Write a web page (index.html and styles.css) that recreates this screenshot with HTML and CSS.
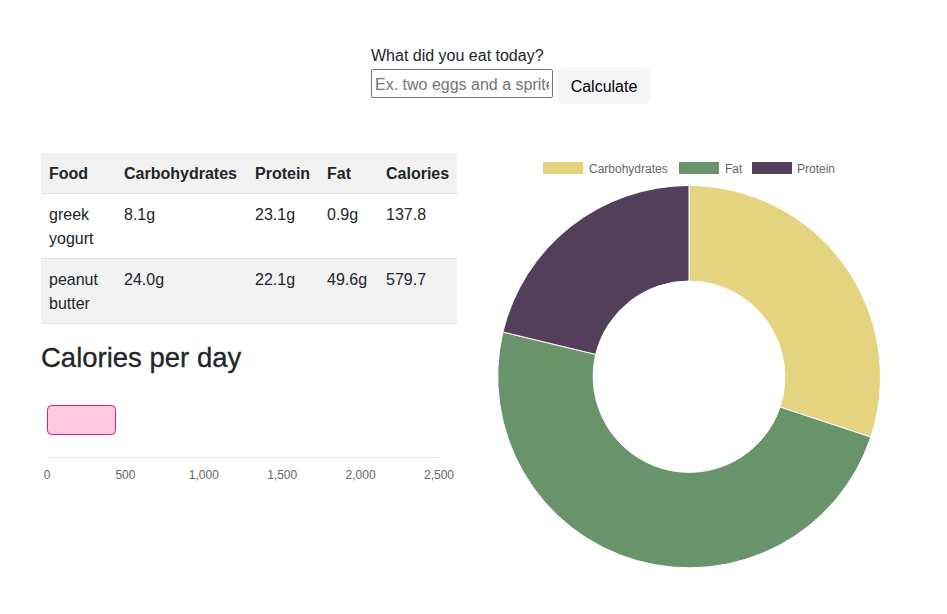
FILE: index.html
```html
<!DOCTYPE html>
<html>
<head>
<meta charset="utf-8">
<link rel="stylesheet" href="styles.css">
</head>
<body>
<div class="page">
  <form class="entry">
    <label class="entry-label" for="food">What did you eat today?</label>
    <div class="entry-row">
      <input id="food" class="entry-input" type="text" placeholder="Ex. two eggs and a sprite">
      <button type="button" class="entry-btn">Calculate</button>
    </div>
  </form>

  <div class="columns">
    <div class="left">
      <table class="foods">
        <colgroup>
          <col class="c-food"><col class="c-carb"><col class="c-prot"><col class="c-fat"><col class="c-cal">
        </colgroup>
        <thead>
          <tr><th>Food</th><th>Carbohydrates</th><th>Protein</th><th>Fat</th><th>Calories</th></tr>
        </thead>
        <tbody>
          <tr><td>greek yogurt</td><td>8.1g</td><td>23.1g</td><td>0.9g</td><td>137.8</td></tr>
          <tr class="alt"><td>peanut butter</td><td>24.0g</td><td>22.1g</td><td>49.6g</td><td>579.7</td></tr>
        </tbody>
      </table>
      <h2 class="cal-title">Calories per day</h2>
      <svg class="bar-chart" width="416" height="100" viewBox="0 0 416 100">
        <rect x="6.5" y="15.5" width="68" height="29" rx="4" fill="#ffcadf" stroke="#c8267a" stroke-width="1"/>
        <line x1="6" y1="67.5" x2="398" y2="67.5" stroke="#e6e6e6" stroke-width="1"/>
        <g class="ticks">
          <text x="6" y="89">0</text>
          <text x="84.4" y="89">500</text>
          <text x="162.8" y="89">1,000</text>
          <text x="241.2" y="89">1,500</text>
          <text x="319.6" y="89">2,000</text>
          <text x="398" y="89">2,500</text>
        </g>
      </svg>
    </div>

    <div class="right">
      <svg class="donut" width="416" height="420" viewBox="0 0 416 420">
        <g class="legend">
          <rect x="62" y="9" width="40" height="12" fill="#e5d47f"/>
          <text x="108" y="19.5">Carbohydrates</text>
          <rect x="198" y="9" width="40" height="12" fill="#68936b"/>
          <text x="244" y="19.5">Fat</text>
          <rect x="271" y="9" width="40" height="12" fill="#533f59"/>
          <text x="316" y="19.5">Protein</text>
        </g>
        <g stroke="#ffffff" stroke-width="1">
          <path fill="#e5d47f" d="M208,32.5 A191.5,191.5 0 0 1 389.8,284.1 L299.1,254.1 A96,96 0 0 0 208,128 Z"/>
          <path fill="#68936b" d="M389.8,284.1 A191.5,191.5 0 0 1 21.9,179 L114.7,201.4 A96,96 0 0 0 299.1,254.1 Z"/>
          <path fill="#533f59" d="M21.9,179 A191.5,191.5 0 0 1 208,32.5 L208,128 A96,96 0 0 0 114.7,201.4 Z"/>
        </g>
      </svg>
    </div>
  </div>
</div>
</body>
</html>
```

FILE: styles.css
```css
html, body {
  margin: 0;
  padding: 0;
  background: #ffffff;
}

body {
  font-family: "Liberation Sans", Arial, sans-serif;
  font-size: 16px;
  line-height: 24px;
  color: #212529;
}

.page {
  padding: 44px 0 0 41px;
}

.entry {
  margin: 0 0 0 330px;
  display: flex;
  flex-direction: column;
  align-items: flex-start;
}

.entry-label {
  display: block;
  height: 24px;
}

.entry-row {
  display: flex;
  align-items: flex-start;
  gap: 4px;
  margin-top: -1px;
}

.entry-input {
  box-sizing: border-box;
  width: 182px;
  height: 29px;
  margin-top: 2px;
  padding: 2px 3px 0 3px;
  border: 1px solid #767676;
  border-radius: 2px;
  font-family: "Liberation Sans", Arial, sans-serif;
  font-size: 16px;
  color: #212529;
  background: #fff;
}

.entry-input::placeholder {
  color: #757575;
}

.entry-btn {
  box-sizing: border-box;
  width: 94px;
  height: 37px;
  padding: 2px 0 0 0;
  border: none;
  border-radius: 6px;
  background: #f5f6f8;
  font-family: "Liberation Sans", Arial, sans-serif;
  font-size: 16px;
  color: #000;
}

.columns {
  display: flex;
  gap: 24px;
  margin-top: 49px;
}

.left, .right {
  width: 416px;
}

.foods {
  width: 416px;
  table-layout: fixed;
  border-collapse: collapse;
}

.c-food { width: 75px; }
.c-carb { width: 131px; }
.c-prot { width: 72px; }
.c-fat { width: 59px; }
.c-cal { width: 79px; }

.foods th, .foods td {
  padding: 9px 8px 7px 8px;
  text-align: left;
  vertical-align: top;
  border-bottom: 1px solid #dee2e6;
}

.foods th {
  font-weight: bold;
  background: #f2f2f2;
}

.foods tr.alt td {
  background: #f2f2f2;
}

.cal-title {
  margin: 17px 0 0 0;
  font-size: 27.5px;
  line-height: 33px;
  font-weight: normal;
  color: #212529;
  -webkit-text-stroke: 0.3px #212529;
}

.bar-chart {
  display: block;
  margin-top: 16px;
}

.ticks text {
  font-family: "Liberation Sans", Arial, sans-serif;
  font-size: 12px;
  fill: #666666;
  text-anchor: middle;
}

.donut {
  display: block;
}

.legend text {
  font-family: "Liberation Sans", Arial, sans-serif;
  font-size: 12px;
  fill: #666666;
}
```
